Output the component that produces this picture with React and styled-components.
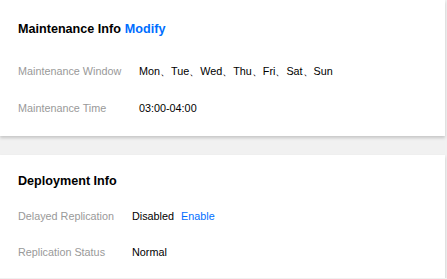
import React from 'react';
import styled, { createGlobalStyle } from 'styled-components';

const GlobalStyle = createGlobalStyle`
    body {
        margin: 0;
        background: #f1f1f1;
        font-family: Arial, "Liberation Sans", sans-serif;
    }
`;

const Page = styled.div`
    width: 445px;
    display: flex;
    flex-direction: column;
    gap: 19px;
`;

const Card = styled.section`
    background: #fff;
    box-shadow: 0 2px 3px rgba(0, 0, 0, 0.18);
    padding: ${p => p.$pad};
`;

const Title = styled.h3`
    margin: 0 0 ${p => p.$gap}px;
    font-size: 12.6px;
    line-height: 20px;
    font-weight: bold;
    color: #000;
`;

const Link = styled.a`
    color: #006eff;
    text-decoration: none;
    cursor: pointer;
    font-weight: ${p => (p.$bold ? 'bold' : 'normal')};
    margin-left: ${p => p.$space}px;
`;

const Rows = styled.div`
    display: flex;
    flex-direction: column;
    gap: ${p => p.$gap}px;
`;

const Row = styled.div`
    display: flex;
    font-size: 10.8px;
    line-height: 18px;
`;

const Label = styled.div`
    width: ${p => p.$width}px;
    flex-shrink: 0;
    color: #999;
`;

const Value = styled.div`
    color: #000;
`;

const InfoCard = ({ title, action, pad, titleGap, rowGap, labelWidth, rows }) => (
    <Card $pad={pad}>
        <Title $gap={titleGap}>
            {title}
            {action && <Link $bold $space={4}>{action}</Link>}
        </Title>
        <Rows $gap={rowGap}>
            {rows.map(r => (
                <Row key={r.label}>
                    <Label $width={labelWidth}>{r.label}</Label>
                    <Value>
                        {r.value}
                        {r.link && <Link $space={7}>{r.link}</Link>}
                    </Value>
                </Row>
            ))}
        </Rows>
    </Card>
);

export default function App() {
    return <Page>
        <GlobalStyle />
        <InfoCard
            title={'Maintenance Info'}
            action={'Modify'}
            pad={'19px 18px 19px'}
            titleGap={23}
            rowGap={19}
            labelWidth={121}
            rows={[
                { label: 'Maintenance Window', value: 'Mon、Tue、Wed、Thu、Fri、Sat、Sun' },
                { label: 'Maintenance Time', value: '03:00-04:00' },
            ]}
        />
        <InfoCard
            title={'Deployment Info'}
            pad={'16px 18px 17px'}
            titleGap={16}
            rowGap={18}
            labelWidth={114}
            rows={[
                { label: 'Delayed Replication', value: 'Disabled', link: 'Enable' },
                { label: 'Replication Status', value: 'Normal' },
            ]}
        />
    </Page>;
}
